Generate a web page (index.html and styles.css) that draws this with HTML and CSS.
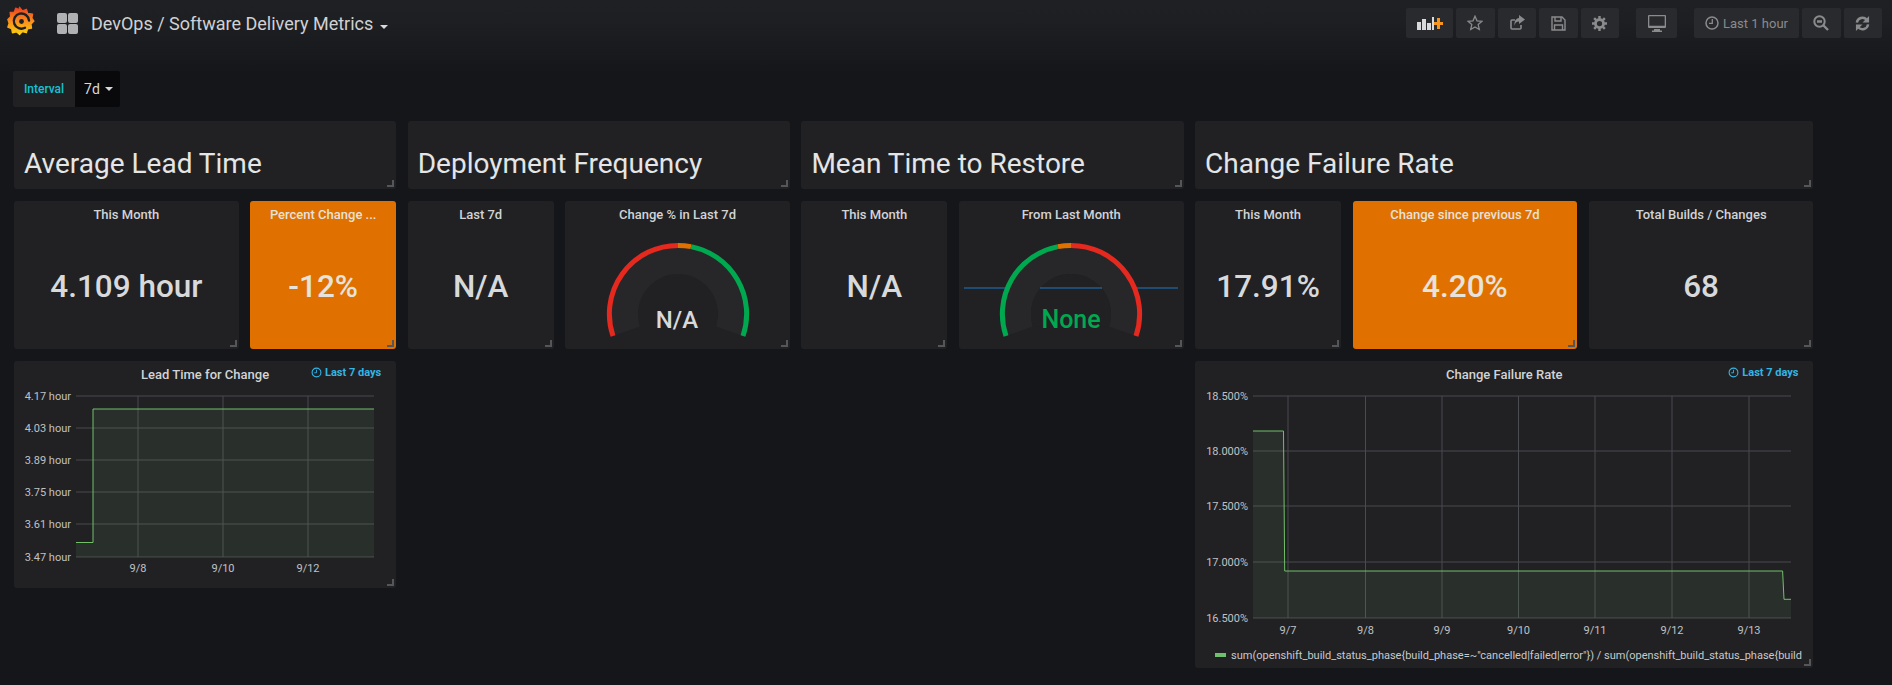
FILE: index.html
```html
<!DOCTYPE html>
<html lang="en">
<head>
<meta charset="utf-8">
<title>DevOps / Software Delivery Metrics</title>
<link rel="stylesheet" href="styles.css">
</head>
<body>
<header class="navbar">
  <svg class="logo" viewBox="0 0 28 30" width="28" height="30">
    <defs><linearGradient id="lg" x1="0" y1="1" x2="0" y2="0"><stop offset="0" stop-color="#fcd20f"/><stop offset=".55" stop-color="#f6851f"/><stop offset="1" stop-color="#ee3d1e"/></linearGradient></defs>
    <path fill="url(#lg)" stroke="url(#lg)" stroke-width="1.200" stroke-linejoin="round" d="M12.500 1l3 3.800 4-1.600 1.200 4.100 5 .7-.8 4.200 2.100 2.800-3 3 .6 4.200-4 .6-1.200 4-4-1.200-2.800 3-3.200-2.800-4 1 -.8-4.200-3.800-1.500 1.300-3.800L.8 13.500l2.800-2.800-.5-4.300 4.200-.4 1.400-4 3.300 1.500z"/>
    <path fill="none" stroke="#1f2023" stroke-width="2.400" stroke-linecap="round" d="M22 14.500a7.600 7.600 0 1 0-4 7.300"/>
    <circle cx="14.500" cy="15.500" r="2.400" fill="#1f2023"/>
  </svg>
  <svg class="dash-icon" viewBox="0 0 21 21" width="21" height="21"><g fill="#b0b1b3"><rect x="0" y="0" width="10" height="10" rx="2"/><rect x="11" y="0" width="10" height="10" rx="2"/><rect x="0" y="11" width="10" height="10" rx="2"/><rect x="11" y="11" width="10" height="10" rx="2"/></g></svg>
  <div class="crumb">DevOps / Software Delivery Metrics<span class="caret"></span></div>
  <div class="tools">
    <div class="btn w-add"><svg viewBox="0 0 26 14" width="26" height="14"><g fill="#d8d9da"><rect x="0" y="6" width="4" height="8"/><rect x="5" y="3" width="4" height="11"/><rect x="10" y="7" width="4" height="7"/><rect x="15" y="1" width="2" height="13"/></g><path fill="#f7941d" d="M20 2h3v4h3v3h-3v4h-3V9h-3V6h3z"/></svg></div>
    <div class="btn w-s"><svg viewBox="0 0 16 16" width="16" height="16"><path fill="none" stroke="#8a8b8d" stroke-width="1.300" d="M8 1.200l2 4.600 5 .5-3.800 3.300 1.100 4.900L8 12l-4.300 2.500 1.100-4.900L1 6.300l5-.5z"/></svg></div>
    <div class="btn w-s"><svg viewBox="0 0 16 16" width="16" height="16"><path fill="none" stroke="#8a8b8d" stroke-width="1.600" d="M12 10v3a1 1 0 0 1-1 1H3a1 1 0 0 1-1-1V6a1 1 0 0 1 1-1h3"/><path fill="#8a8b8d" d="M10 0l6 4.500-6 4.500V6.500C7.500 6.500 6 8 5.500 10.500 5 6.500 7 3.300 10 3z"/></svg></div>
    <div class="btn w-s"><svg viewBox="0 0 15 15" width="15" height="15"><path fill="none" stroke="#8a8b8d" stroke-width="1.400" d="M1 1h10l3 3v10H1z"/><path fill="none" stroke="#8a8b8d" stroke-width="1.400" d="M4 1v4h6V1M3.500 14V9h8v5"/></svg></div>
    <div class="btn w-s"><svg viewBox="0 0 16 16" width="15" height="15"><circle cx="8" cy="8" r="4.300" fill="none" stroke="#8a8b8d" stroke-width="3"/><path stroke="#8a8b8d" stroke-width="2.600" d="M8 0v3M8 13v3M0 8h3M13 8h3M2.300 2.300l2.100 2.100M11.600 11.600l2.100 2.100M2.300 13.700l2.100-2.100M11.600 4.400l2.100-2.100"/></svg></div>
    <div class="btn w-m sep"><svg viewBox="0 0 18 17" width="18" height="17"><path fill="#8a8b8d" d="M1 0h16a1 1 0 0 1 1 1v11a1 1 0 0 1-1 1H1a1 1 0 0 1-1-1V1a1 1 0 0 1 1-1zm.3 1.300v9.400h15.400V1.300zM6 14h6v1.500h2V17H4v-1.500h2z"/></svg></div>
    <div class="btn w-t sep"><svg viewBox="0 0 14 14" width="14" height="14"><circle cx="7" cy="7" r="6" fill="none" stroke="#8a8b8d" stroke-width="1.500"/><path fill="none" stroke="#8a8b8d" stroke-width="1.300" d="M7.300 3v4.300H4"/></svg><span>Last 1 hour</span></div>
    <div class="btn w-s"><svg viewBox="0 0 16 16" width="16" height="16"><circle cx="6.500" cy="6.500" r="5.200" fill="none" stroke="#8a8b8d" stroke-width="2"/><path stroke="#8a8b8d" stroke-width="2.400" d="M10.500 10.500l4.500 4.500M4 6.500h5"/></svg></div>
    <div class="btn w-s"><svg viewBox="0 0 16 16" width="15" height="15"><path fill="none" stroke="#8a8b8d" stroke-width="2.600" d="M2 7a6 6 0 0 1 10.500-3M14 9a6 6 0 0 1-10.500 3"/><path fill="#8a8b8d" d="M15 0v7H8zM1 16V9h7z"/></svg></div>
  </div>
</header>

<div class="vars">
  <div class="var-label">Interval</div>
  <div class="var-value">7d<span class="caret small"></span></div>
</div>

<main class="grid">
  <section class="panel head c10"><h2>Average Lead Time</h2></section>
  <section class="panel head c10"><h2>Deployment Frequency</h2></section>
  <section class="panel head c10"><h2>Mean Time to Restore</h2></section>
  <section class="panel head c16"><h2>Change Failure Rate</h2></section>

  <section class="panel stat c6"><h3>This Month</h3><div class="big">4.109 hour</div></section>
  <section class="panel stat c4 warn"><h3>Percent Change ...</h3><div class="big">-12%</div></section>
  <section class="panel stat c4"><h3>Last 7d</h3><div class="big">N/A</div></section>
  <section class="panel stat c6"><h3>Change % in Last 7d</h3>
    <svg class="gauge" viewBox="-112 -88 224 120" width="224" height="120">
      <path class="track" d="M-65 22A68.600 68.600 0 1 1 65 22L38 12.500A40 40 0 1 0-38 12.500z"/>
      <path class="a-red" d="M-65 22A68.600 68.600 0 0 1 0 -68.600"/>
      <path class="a-org" d="M0 -68.600A68.600 68.600 0 0 1 13 -67.400"/>
      <path class="a-grn" d="M13 -67.400A68.600 68.600 0 0 1 65 22"/>
      <text class="gv" x="-1" y="14">N/A</text>
    </svg>
  </section>
  <section class="panel stat c4"><h3>This Month</h3><div class="big">N/A</div></section>
  <section class="panel stat c6"><h3>From Last Month</h3>
    <svg class="gauge" viewBox="-112 -88 224 120" width="224" height="120">
      <path class="spark" d="M-107 -26H107"/>
      <path class="track" d="M-65 22A68.600 68.600 0 1 1 65 22L38 12.500A40 40 0 1 0-38 12.500z"/>
      <path class="hole" d="M-38 12.500A40 40 0 1 1 38 12.500z"/>
      <path class="spark" d="M-31 -26H31"/>
      <path class="a-grn" d="M-65 22A68.600 68.600 0 0 1 -13 -67.400"/>
      <path class="a-org" d="M-13 -67.400A68.600 68.600 0 0 1 0 -68.600"/>
      <path class="a-red" d="M0 -68.600A68.600 68.600 0 0 1 65 22"/>
      <text class="gv green" x="0" y="14">None</text>
    </svg>
  </section>
  <section class="panel stat c4"><h3>This Month</h3><div class="big">17.91%</div></section>
  <section class="panel stat c6 warn"><h3>Change since previous 7d</h3><div class="big">4.20%</div></section>
  <section class="panel stat c6"><h3>Total Builds / Changes</h3><div class="big">68</div></section>

  <section class="panel chart c10 short">
    <h3>Lead Time for Change</h3>
    <div class="range"><svg viewBox="0 0 12 12" width="11" height="11"><circle cx="6" cy="6" r="4.800" fill="none" stroke="#33b5e5" stroke-width="1.200"/><path fill="none" stroke="#33b5e5" d="M6 3v3.300H3.500"/></svg>Last 7 days</div>
    <svg class="plot" viewBox="0 0 382 188" width="382" height="188">
      <g class="gridl">
        <path d="M62 7H360M62 39H360M62 71H360M62 103H360M62 135H360M62 168H360"/>
        <path d="M124 7V168M209 7V168M294 7V168"/>
      </g>
      <path class="fill" d="M62 168V153.500H79V20H360V168z"/>
      <path class="line" d="M62 153.500H79V20H360"/>
      <g class="yl">
        <text x="57" y="11">4.17 hour</text><text x="57" y="43">4.03 hour</text><text x="57" y="75">3.89 hour</text><text x="57" y="107">3.75 hour</text><text x="57" y="139">3.61 hour</text><text x="57" y="172">3.47 hour</text>
      </g>
      <g class="xl"><text x="124" y="183">9/8</text><text x="209" y="183">9/10</text><text x="294" y="183">9/12</text></g>
    </svg>
  </section>
  <section class="panel chart c16 at-right">
    <h3>Change Failure Rate</h3>
    <div class="range"><svg viewBox="0 0 12 12" width="11" height="11"><circle cx="6" cy="6" r="4.800" fill="none" stroke="#33b5e5" stroke-width="1.200"/><path fill="none" stroke="#33b5e5" d="M6 3v3.300H3.500"/></svg>Last 7 days</div>
    <svg class="plot" viewBox="0 0 618 252" width="618" height="252">
      <g class="gridl">
        <path d="M58 7H596M58 62H596M58 117H596M58 173H596M58 229H596"/>
        <path d="M93 7V229M170.500 7V229M247 7V229M323.500 7V229M400 7V229M477 7V229M554 7V229"/>
      </g>
      <path class="fill" d="M58 229V42H88.500L89.700 182H587.600L589 210.300H596V229z"/>
      <path class="line" d="M58 42H88.500L89.700 182H587.600L589 210.300H596"/>
      <g class="yl">
        <text x="53" y="11">18.500%</text><text x="53" y="66">18.000%</text><text x="53" y="121">17.500%</text><text x="53" y="177">17.000%</text><text x="53" y="233">16.500%</text>
      </g>
      <g class="xl"><text x="93" y="245">9/7</text><text x="170.500" y="245">9/8</text><text x="247" y="245">9/9</text><text x="323.500" y="245">9/10</text><text x="400" y="245">9/11</text><text x="477" y="245">9/12</text><text x="554" y="245">9/13</text></g>
    </svg>
    <div class="legend"><i class="swatch"></i><span>sum(openshift_build_status_phase{build_phase=~"cancelled|failed|error"}) / sum(openshift_build_status_phase{build</span></div>
  </section>
</main>
</body>
</html>
```
FILE: styles.css
```css
* { box-sizing: border-box; }
html, body { margin: 0; padding: 0; }
body {
  width: 1892px; height: 685px; overflow: hidden;
  background: #141619 linear-gradient(#1f2023 0, #1e1f22 20px, #141619 75px, #141619 100%);
  font-family: Roboto, "Liberation Sans", sans-serif; color: #d8d9da;
}
.navbar { display: flex; align-items: center; height: 46px; padding: 0 10px 0 7px; }
.logo { flex: none; margin-bottom: 4px; }
.dash-icon { flex: none; margin-left: 22px; }
.crumb { margin-left: 13px; font-size: 18px; color: #d0d1d3; }
.caret { display: inline-block; margin-left: 7px; vertical-align: 1px; border: 4px solid transparent; border-top-color: #d8d9da; border-bottom: 0; }
.caret.small { margin-left: 5px; vertical-align: 2px; }
.tools { margin-left: auto; display: flex; gap: 3px; }
.btn { height: 30px; display: flex; align-items: center; justify-content: center; gap: 4px; background: #292a2d; border-radius: 2px; color: #8a8b8d; font-size: 13px; }
.w-add { width: 47px; }
.w-s { width: 38.500px; }
.w-m { width: 41px; }
.w-t { width: 105px; }
.sep { margin-left: 14px; }
.vars { display: flex; height: 36px; margin: 25px 0 0 13px; width: 107px; font-size: 12px; }
.var-label { width: 62px; display: flex; align-items: center; justify-content: center; background: #212124; color: #13c3d6; border-radius: 2px 0 0 2px; font-weight: 500; }
.var-value { flex: 1; display: flex; align-items: center; justify-content: center; padding-left: 2px; background: #09090b; font-size: 14px; border-radius: 0 2px 2px 0; color: #d8d9da; }
.grid { display: grid; width: 1811px; margin: 14px 0 0 14px; grid-template-columns: repeat(46, 1fr); grid-template-rows: 68px 148px 307px; row-gap: 12px; }
.panel { position: relative; background: #212124; border-radius: 3px; margin-right: 11.500px; }
.panel::after { content: ""; position: absolute; right: 2px; bottom: 2px; width: 5px; height: 5px; border-right: 2px solid #55565a; border-bottom: 2px solid #55565a; }
.c4 { grid-column: span 4; }
.c6 { grid-column: span 6; }
.c10 { grid-column: span 10; }
.c16 { grid-column: span 16; }
.head { display: flex; align-items: center; padding: 17px 0 0 10px; }
.head h2 { margin: 0; font-size: 28px; font-weight: 400; color: #e4e5e6; }
.stat { display: flex; flex-direction: column; align-items: center; min-width: 0; overflow: hidden; }
.stat h3, .chart h3 { margin: 0; padding-top: 5px; font-size: 13px; line-height: 17px; font-weight: 500; color: #d2d3d5; text-align: center; }
.stat h3 { height: 23px; flex: none; }
.big { flex: 1; display: flex; align-items: center; font-size: 31.500px; font-weight: 500; color: #d8d9da; }
.warn { background: #e07000; }
.warn h3, .warn .big { color: #e6e2dc; }
.gauge { display: block; margin-top: 2px; flex: none; }
.track { fill: #272729; }
.hole { fill: #212124; }
.a-red, .a-org, .a-grn { fill: none; stroke-width: 5; }
.a-red { stroke: #e5291f; }
.a-org { stroke: #e07000; }
.a-grn { stroke: #00a84f; }
.spark { stroke: #1f78c1; stroke-width: 1; fill: none; }
.gv { font: 500 24px Roboto, sans-serif; fill: #d8d9da; text-anchor: middle; }
.gv.green { fill: #00a84f; font-size: 25px; }
.chart { grid-row: 3; }
.short { align-self: start; height: 227px; }
.at-right { grid-column: 31 / span 16; }
.chart h3 { height: 28px; }
.range { position: absolute; right: 15px; top: 5px; display: flex; align-items: center; gap: 3px; font-size: 11px; font-weight: 700; color: #33b5e5; }
.plot { display: block; }
.gridl path { stroke: #4a4b4e; stroke-width: 1; fill: none; }
.fill { fill: #73bf69; fill-opacity: .1; }
.line { fill: none; stroke: #73bf69; stroke-width: 1; }
.yl text { font-size: 11px; fill: #c0c1c3; text-anchor: end; }
.xl text { font-size: 11px; fill: #c0c1c3; text-anchor: middle; }
.legend { display: flex; align-items: center; height: 20px; margin: 4px 5px 0 20px; overflow: hidden; white-space: nowrap; font-size: 11px; color: #c8c9ca; }
.swatch { flex: none; width: 11px; height: 4px; margin-right: 5px; background: #6ec16b; }
```
